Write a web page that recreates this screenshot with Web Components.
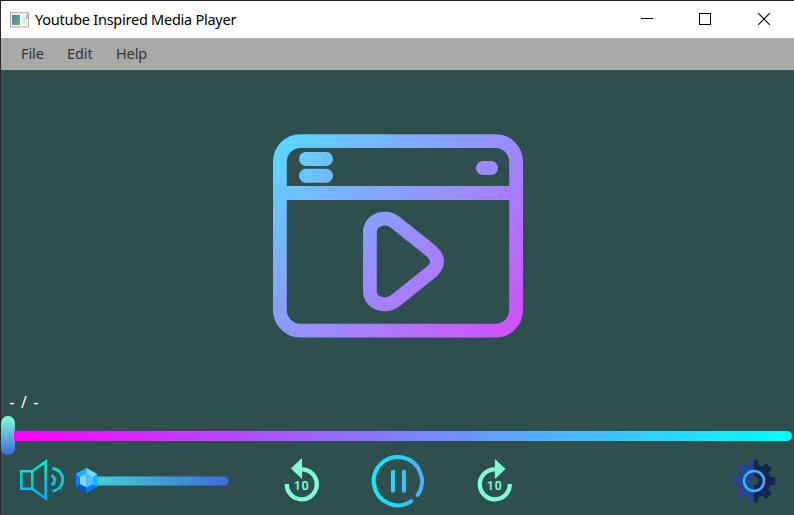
<!DOCTYPE html>
<html lang="en"><head><meta charset="utf-8"><title>Youtube Inspired Media Player</title>
<style>html,body{margin:0;height:100%;overflow:hidden;background:#2f4f4f}</style></head>
<body><media-window></media-window>
<script>
function define(name, html){
  const t=document.createElement('template'); t.innerHTML=html;
  customElements.define(name, class extends HTMLElement{
    constructor(){super();this.attachShadow({mode:'open'}).appendChild(t.content.cloneNode(true));}
  });
}
define('title-bar',`<style>
:host{display:flex;align-items:center;height:37px;background:#fff;color:#000;font-size:14.5px}
.app{margin-left:9px;width:19px;height:16px;flex:none}
.name{margin-left:6px;margin-bottom:2px;flex:1;white-space:nowrap;letter-spacing:-.25px;line-height:20px}
.btns{width:174px;height:37px;flex:none}
</style>
<svg class="app" viewBox="0 0 19 16"><defs><linearGradient id="a" x2="1" y2="1"><stop stop-color="#4e75a4"/><stop offset="1" stop-color="#65b878"/></linearGradient></defs>
<rect x=".5" y=".5" width="18" height="14.5" fill="#f5f5f5" stroke="#aaa"/><path d="M1 1.2h17" stroke="#ddd"/><rect x="2" y="3" width="8" height="10" fill="url(#a)"/><rect x="11.500" y="3" width="5" height="10" fill="#e5efea"/><path d="M17 2v5" stroke="#7a9b96"/></svg>
<span class="name"><slot></slot></span>
<svg class="btns" viewBox="620 1 174 37" fill="none" stroke="#000"><path d="M641 18.5h12M699.5 13.5h11v11h-11z" shape-rendering="crispEdges"/><path d="M758.2 13.2l11.6 11.6M769.8 13.2l-11.6 11.6" stroke-width="1.1"/></svg>`);
define('menu-bar',`<style>:host{display:flex;align-items:center;gap:23.3px;height:32px;padding:0 0 2px 20px;background:#a9a9a9;color:#343434;font-size:14.5px;letter-spacing:-.1px;box-sizing:border-box}</style><slot></slot>`);
define('menu-item',`<style>:host{display:block;line-height:20px}</style><slot></slot>`);
define('media-stage',`<style>:host{display:flex;justify-content:center;height:321px;flex:none}svg{width:270px;height:321px;display:block;margin-left:1px}</style>
<svg viewBox="263 70 270 321" fill="none" stroke="url(#g)" stroke-width="13.8"><defs><linearGradient id="g" gradientUnits="userSpaceOnUse" x1="285" y1="123" x2="511" y2="349"><stop stop-color="#55dcff"/><stop offset=".5" stop-color="#9591ff"/><stop offset="1" stop-color="#d54bff"/></linearGradient></defs>
<rect x="279.9" y="141.1" width="236.2" height="189.5" rx="20.5"/>
<path d="M286 186h224v14H286z" fill="url(#g)" stroke="none"/>
<g fill="url(#g)" stroke="none"><rect x="299" y="152" width="34" height="14" rx="7"/><rect x="299" y="168.8" width="34" height="14" rx="7"/><rect x="476" y="161" width="22" height="14" rx="7"/></g>
<path d="M369.9 232C369.9 219 386 215 395.500 222.500L432.500 252.200Q441.500 261.500 432.500 270.800L395.500 300.500C386 308 369.900 304 369.900 291Z"/></svg>`);
define('time-label',`<style>:host{display:flex;align-items:center;height:22px;box-sizing:border-box;padding:0 0 1px 8.500px;color:#fff;font-size:15.5px;white-space:pre;letter-spacing:.8px;word-spacing:1px}</style><slot></slot>`);
define('seek-bar',`<style>:host{display:flex;align-items:center;height:42px}
.thumb{width:14px;height:39px;border-radius:7px;background:linear-gradient(#7fffd4,#4169e1);margin-top:2px;flex:none}
.track{flex:1;height:10px;margin:4px 2px 0 -1px;border-radius:0 5px 5px 0;background:linear-gradient(90deg,#f0f,#0ff)}</style><div class="thumb"></div><div class="track"></div>`);
define('player-controls',`<style>:host{display:flex;height:60px}svg{display:block;height:60px;flex:none}.vol{width:231px}.back{width:60px;margin-left:43px}.pause{width:66px;margin-left:30px}.next{width:60px;margin-left:34px}.gear{width:70px;margin-left:auto}text{font:500 12px Roboto,sans-serif;letter-spacing:.9px}</style>
<svg class="vol" viewBox="1 455 231 60"><defs>
<linearGradient id="v" gradientUnits="userSpaceOnUse" x1="40" y1="460" x2="40" y2="501"><stop stop-color="#00f2d5"/><stop offset="1" stop-color="#00a8f4"/></linearGradient>
<linearGradient id="s"><stop stop-color="#40e0d0"/><stop offset="1" stop-color="#4169e1"/></linearGradient></defs>
<g fill="none" stroke="url(#v)" stroke-width="2.6"><path d="M21.300 471.300H32.300V488.700H21.300zM32.300 471.300L45.700 461.500V498.500L32.300 488.700"/><path d="M51.500 475.500a5.200 5.200 0 0 1 0 9.500M52.500 468.500a11.300 11.300 0 0 1 0 22.500" stroke-width="2.8"/></g>
<rect x="79" y="476.500" width="149.500" height="9" rx="4.500" fill="url(#s)"/>
<g><path d="M86.500 468L97.200 474V487L86.500 493L75.800 487V474z" fill="#067cff"/><path d="M86.500 468V474L80 477.500L75.800 474z" fill="#12b5ff"/><path d="M86.500 468L97.200 474L93 477.500L86.500 474z" fill="#84d2ff"/><path d="M97.200 474V487L93 484V477z" fill="#12b5ff"/><path d="M75.800 487L80 484L86.500 487.500V493z" fill="#0057c9"/><path d="M86.500 473.500L80 477V484L86.500 487.500z" fill="#83d1ff"/><path d="M86.500 473.500L93 477V484L86.500 487.500z" fill="#4fc3ff"/></g></svg>
<svg class="back" viewBox="275 455 60 60"><path d="M286.800 484A15 15 0 1 0 301.700 469.300" fill="none" stroke="#7fffd4" stroke-width="4.300"/><path d="M302 458V479L291 468.500z" fill="#7fffd4"/><text x="294" y="490.200" fill="#7fffd4" stroke="#7fffd4" stroke-width=".2">10</text></svg>
<svg class="pause" viewBox="365 455 66 60" fill="none" stroke="url(#p)" stroke-width="4" stroke-linecap="round"><defs><linearGradient id="p" gradientUnits="userSpaceOnUse" x1="372" y1="480" x2="424" y2="480"><stop stop-color="#00f2fe"/><stop offset="1" stop-color="#4facfe"/></linearGradient></defs><path d="M411.300 501.100A24.100 24.100 0 1 1 417.600 494.900"/><path d="M392.900 472h.01V490.700M403.900 472h.01V490.700"/></svg>
<svg class="next" viewBox="465 455 60 60"><path d="M509.800 484A15 15 0 1 1 494.900 469.300" fill="none" stroke="#7fffd4" stroke-width="4.300"/><path d="M494.900 459V479L505.500 469z" fill="#7fffd4"/><text x="487" y="490.200" fill="#7fffd4" stroke="#7fffd4" stroke-width=".2">10</text></svg>
<svg class="gear" viewBox="724 455 70 60"><defs><clipPath id="r"><path d="M754 455h30v60h-30z"/></clipPath><linearGradient id="c"><stop stop-color="#20bfff"/><stop offset="1" stop-color="#55a9ff"/></linearGradient>
<g id="pair"><rect x="749.900" y="459.800" width="8.200" height="7" rx="1"/><rect x="749.900" y="495.200" width="8.200" height="7" rx="1"/></g>
<g id="gear"><circle cx="754" cy="481" r="10.500" fill="none" stroke="currentColor" stroke-width="12"/><g fill="currentColor"><use href="#pair"/><use href="#pair" transform="rotate(45 754 481)"/><use href="#pair" transform="rotate(90 754 481)"/><use href="#pair" transform="rotate(135 754 481)"/></g></g></defs><use href="#gear" color="#27438d"/><use href="#gear" color="#132550" clip-path="url(#r)"/><circle cx="754" cy="481" r="10" fill="none" stroke="url(#c)" stroke-width="2.500"/></svg>`);
define('media-window',`<style>:host{display:flex;flex-direction:column;box-sizing:border-box;width:794px;height:515px;border-top:1px solid #242323;border-left:1px solid #292929;background:#2f4f4f;font-family:"Noto Sans","Open Sans",sans-serif}</style>
<title-bar>Youtube Inspired Media Player</title-bar>
<menu-bar><menu-item>File</menu-item><menu-item>Edit</menu-item><menu-item>Help</menu-item></menu-bar>
<media-stage></media-stage><time-label>- / -</time-label><seek-bar></seek-bar><player-controls></player-controls>`);
</script></body></html>
